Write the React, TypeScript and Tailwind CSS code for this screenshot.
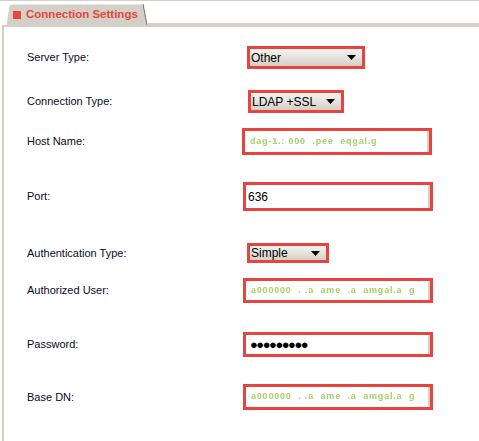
import React from "react";

type Row = {
  label: string;
  mt: string;
  h: string;
  control: React.ReactNode;
};

const Select = ({ value, width }: { value: string; width: string }) => {
  return (
    <div className={`h-full ${width} border-[3px] border-[#e8443f]`}>
      <div className="flex h-full items-center justify-between bg-gradient-to-b from-[#f3f2ee] via-[#e6e3dc] to-[#d3cfc6] pl-[1px] pr-[6px] text-[12px] text-black">
        <span>{value}</span>
        <svg width="9" height="5" viewBox="0 0 9 5">
          <path d="M0 0h9L4.5 5z" fill="#000" />
        </svg>
      </div>
    </div>
  );
};

const Input = ({ children }: { children?: React.ReactNode }) => {
  return (
    <div className="h-full w-[190px] border-[3px] border-[#e8443f]">
      <div className="flex h-full items-center overflow-hidden border-r-2 border-[#d4d0c8] bg-white pl-[2px] text-[12px] text-black">
        {children}
      </div>
    </div>
  );
};

const Smudge = ({ text }: { text: string }) => {
  return (
    <span className="whitespace-pre pl-[3px] text-[9px] font-bold tracking-[0.8px] text-[#a9cf6a] blur-[0.4px]">
      {text}
    </span>
  );
};

const rows: Row[] = [
  { label: "Server Type:", mt: "mt-[19px]", h: "h-[23px]", control: <div className="ml-[4px] h-full"><Select value="Other" width="w-[118px]" /></div> },
  { label: "Connection Type:", mt: "mt-[21px]", h: "h-[23px]", control: <div className="ml-[5px] h-full"><Select value="LDAP +SSL" width="w-[96px]" /></div> },
  { label: "Host Name:", mt: "mt-[15px]", h: "h-[27px]", control: <div className="-ml-[1px] h-full"><Input><Smudge text="dag-1.: 000  .pee  eqgal.g" /></Input></div> },
  { label: "Port:", mt: "mt-[27px]", h: "h-[29px]", control: <Input>636</Input> },
  { label: "Authentication Type:", mt: "mt-[32px]", h: "h-[20px]", control: <div className="ml-[4px] h-full"><Select value="Simple" width="w-[82px]" /></div> },
  { label: "Authorized User:", mt: "mt-[15px]", h: "h-[25px]", control: <Input><Smudge text="a000000  . .a  ame  .a  amgal.a  g" /></Input> },
  { label: "Password:", mt: "mt-[29px]", h: "h-[25px]", control: <Input><span className="pl-[2px] text-[13px] tracking-[-1.5px]">●●●●●●●●●</span></Input> },
  { label: "Base DN:", mt: "mt-[27px]", h: "h-[26px]", control: <Input><Smudge text="a000000  . .a  ame  .a  amgal.a  g" /></Input> },
];

export default function App() {
  return (
    <div className="relative h-[441px] w-[479px] overflow-hidden bg-white font-['Liberation_Sans',Arial,sans-serif]">
      <div className="h-px w-full bg-[#d4d0c8]" />
      <div className="flex h-[24px] items-end">
        <div className="relative ml-[6px] h-[22px] w-[142px]">
          <svg className="absolute inset-0" width="142" height="22" viewBox="0 0 142 22">
            <path d="M0 22 L3 3 Q3.5 1 6 1 L137 1 L141 22 Z" fill="#d4d0c8" />
            <path d="M137 1 L141 22" stroke="#6f6c66" strokeWidth="1" fill="none" />
            <path d="M0 22 L3 3 Q3.5 1 6 1 L137 1" stroke="#ffffff" strokeWidth="1" fill="none" />
          </svg>
          <div className="relative flex h-full items-center gap-[5px] pl-[7px] pt-[2px]">
            <div className="h-[8px] w-[8px] bg-[#e4473c]" />
            <span className="text-[11.5px] font-bold text-[#e4473c]">Connection Settings</span>
          </div>
        </div>
        <div className="h-[2px] flex-1 bg-[#d4d0c8]" />
      </div>
      <div className="ml-[2px] h-[416px] border-l-2 border-t-2 border-[#d4d0c8]">
        {rows.map((row) => (
          <div key={row.label} className={`flex items-center ${row.mt} ${row.h}`}>
            <div className="w-[239px] pl-[23px] text-[11px] text-[#0a0a1e]">{row.label}</div>
            {row.control}
          </div>
        ))}
      </div>
    </div>
  );
}
